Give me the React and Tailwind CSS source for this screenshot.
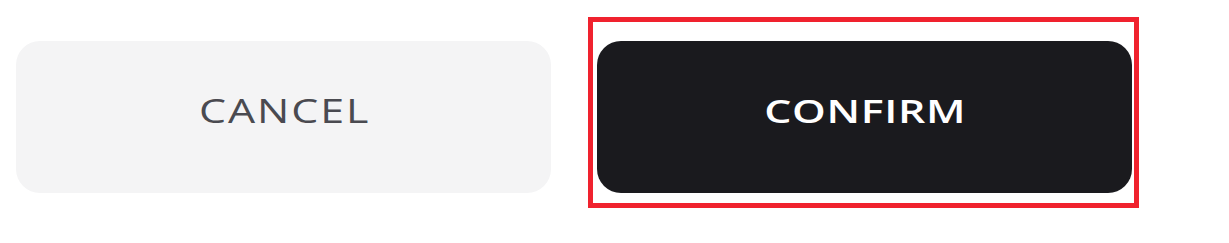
export default function App() {
  return (
    <div className="relative w-[1229px] h-[243px] bg-white overflow-hidden" style={{ fontFamily: '"Open Sans", "Liberation Sans", sans-serif' }}>
      <div className="flex gap-[46px] pl-[16px] pt-[41px]">
        <button className="w-[535px] h-[152px] rounded-[24px] bg-[#f4f4f5] text-[#4a4a50] text-[33px] font-medium pb-[12px] flex items-center justify-center">
          <span className="inline-block scale-x-[1.3] tracking-[1.5px] pl-[1.5px]">CANCEL</span>
        </button>
        <button className="w-[535px] h-[152px] rounded-[24px] bg-[#1a1a1e] text-white text-[33px] font-semibold pb-[12px] flex items-center justify-center">
          <span className="inline-block scale-x-[1.3] tracking-[0.5px] pl-[0.5px]">CONFIRM</span>
        </button>
      </div>

      {/* highlight frame */}
      <div className="absolute left-[588px] top-[17px] w-[551px] h-[191px] border-[5px] border-[#f0222e] pointer-events-none" />
    </div>
  )
}
